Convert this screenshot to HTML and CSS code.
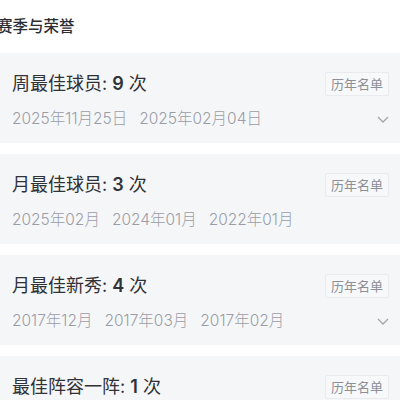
FILE: index.html
```html
<!DOCTYPE html>
<html lang="zh">
<head>
<meta charset="utf-8">
<link rel="stylesheet" href="styles.css">
</head>
<body>
<div class="page">
  <h2 class="section-title">赛季与荣誉</h2>
  <div class="card">
    <div class="card-head">
      <div class="award">周最佳球员: <span class="num">9</span> 次</div>
      <span class="badge">历年名单</span>
    </div>
    <div class="card-dates">
      <div class="dates"><span>2025年11月25日</span><span>2025年02月04日</span></div>
      <svg class="chev" width="12" height="7" viewBox="0 0 12 7"><path d="M1 1l5 5 5-5" fill="none" stroke="#a3a5ad" stroke-width="1.3"/></svg>
    </div>
  </div>
  <div class="card">
    <div class="card-head">
      <div class="award">月最佳球员: <span class="num">3</span> 次</div>
      <span class="badge">历年名单</span>
    </div>
    <div class="card-dates">
      <div class="dates"><span>2025年02月</span><span>2024年01月</span><span>2022年01月</span></div>
    </div>
  </div>
  <div class="card">
    <div class="card-head">
      <div class="award">月最佳新秀: <span class="num">4</span> 次</div>
      <span class="badge">历年名单</span>
    </div>
    <div class="card-dates">
      <div class="dates"><span>2017年12月</span><span>2017年03月</span><span>2017年02月</span></div>
      <svg class="chev" width="12" height="7" viewBox="0 0 12 7"><path d="M1 1l5 5 5-5" fill="none" stroke="#a3a5ad" stroke-width="1.3"/></svg>
    </div>
  </div>
  <div class="card">
    <div class="card-head">
      <div class="award">最佳阵容一阵: <span class="num">1</span> 次</div>
      <span class="badge">历年名单</span>
    </div>
    <div class="card-dates">
      <div class="dates"><span>2022年</span></div>
    </div>
  </div>
</div>
</body>
</html>
```

FILE: styles.css
```css
html, body {
  margin: 0;
  padding: 0;
  background: #ffffff;
  font-family: "Inter", "Noto Sans CJK SC", sans-serif;
  overflow: hidden;
  height: 400px;
}
.page {
  display: flex;
  flex-direction: column;
  gap: 11px;
  width: 400px;
}
.section-title {
  margin: 17px 0 5px -3px;
  font-size: 15.5px;
  line-height: 20px;
  font-weight: 500;
  color: #2b2d33;
}
.card {
  background: #f5f6f8;
  padding: 19px 11px 15px 12px;
  height: 56px;
  box-sizing: content-box;
  flex-shrink: 0;
}
.card-head {
  display: flex;
  justify-content: space-between;
  align-items: center;
  height: 24px;
}
.award {
  font-size: 18px;
  line-height: 24px;
  color: #303237;
}
.num {
  font-weight: 600;
}
.badge {
  font-size: 13px;
  line-height: 22px;
  padding: 0 5px;
  color: #8c8f98;
  border: 1px solid #e9ebef;
  background: #f7f8fa;
  border-radius: 2px;
}
.card-dates {
  display: flex;
  justify-content: space-between;
  align-items: center;
  margin-top: 13px;
  height: 20px;
}
.dates {
  display: flex;
  gap: 12px;
  font-size: 15.5px;
  line-height: 20px;
  font-weight: 300;
  color: #9a9da7;
}
```
